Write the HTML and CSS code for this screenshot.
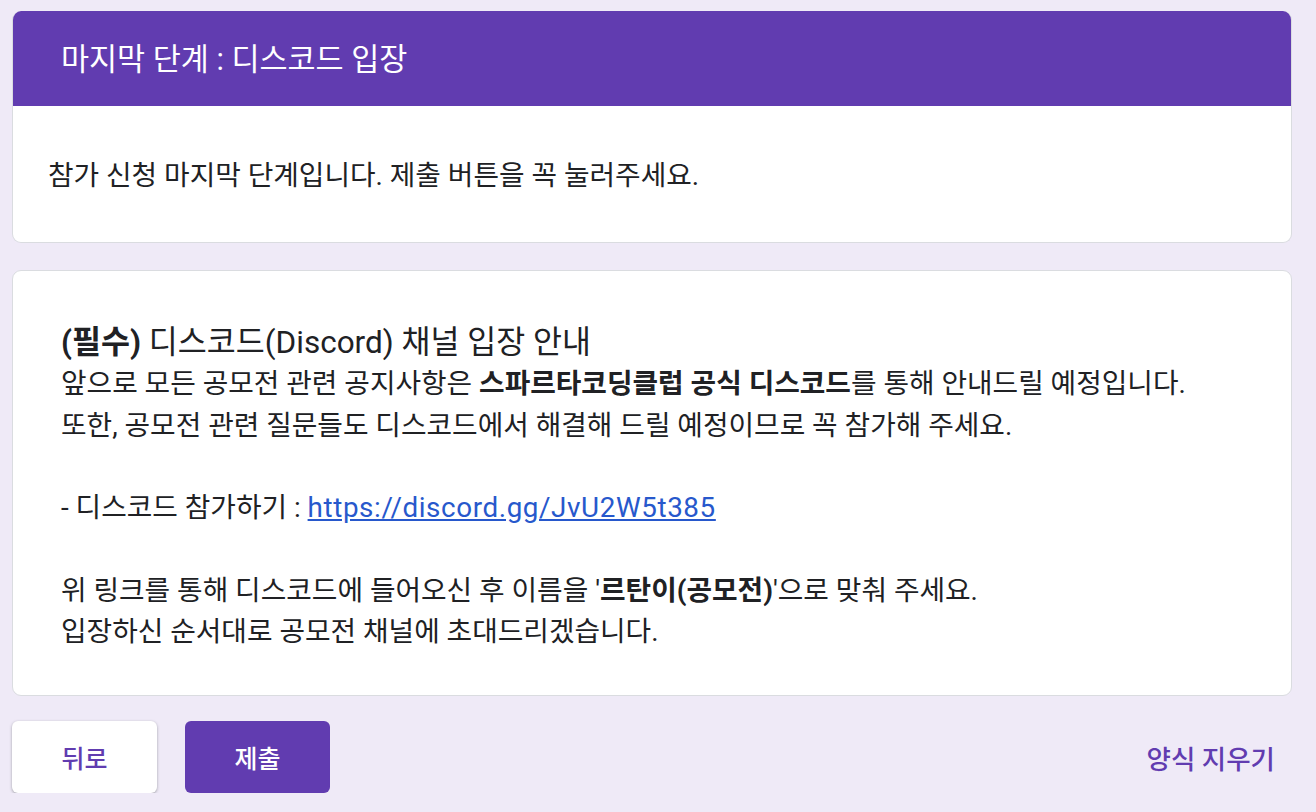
FILE: index.html
```html
<!DOCTYPE html>
<html lang="ko">
<head>
<meta charset="utf-8">
<title>마지막 단계 : 디스코드 입장</title>
<link rel="stylesheet" href="styles.css">
</head>
<body>
<main class="form">
  <section class="card header-card">
    <div class="header-bar">
      <h1 class="header-title">마지막 단계 : 디스코드 입장</h1>
    </div>
    <div class="header-body">
      <p class="desc">참가 신청 마지막 단계입니다. 제출 버튼을 꼭 눌러주세요.</p>
    </div>
  </section>

  <section class="card info-card">
    <div class="info-text">
      <p class="lead"><b>(필수)</b> 디스코드(Discord) 채널 입장 안내</p>
      <p>앞으로 모든 공모전 관련 공지사항은 <b>스파르타코딩클럽 공식 디스코드</b>를 통해 안내드릴 예정입니다.</p>
      <p>또한, 공모전 관련 질문들도 디스코드에서 해결해 드릴 예정이므로 꼭 참가해 주세요.</p>
      <p class="blank">&nbsp;</p>
      <p>- 디스코드 참가하기 : <a class="link" href="#">https://discord.gg/JvU2W5t385</a></p>
      <p class="blank">&nbsp;</p>
      <p>위 링크를 통해 디스코드에 들어오신 후 이름을 '<b>르탄이(공모전)</b>'으로 맞춰 주세요.</p>
      <p>입장하신 순서대로 공모전 채널에 초대드리겠습니다.</p>
    </div>
  </section>

  <div class="footer">
    <div class="buttons">
      <button class="btn btn-back" type="button">뒤로</button>
      <button class="btn btn-submit" type="button">제출</button>
    </div>
    <button class="clear" type="button">양식 지우기</button>
  </div>
</main>
</body>
</html>
```

FILE: styles.css
```css
html, body {
  margin: 0;
  padding: 0;
}
body {
  background: #efeaf7;
  font-family: Roboto, "Noto Sans CJK KR", sans-serif;
  color: #202124;
}
.form {
  width: 1280px;
  padding: 11px 0 0 12px;
  display: flex;
  flex-direction: column;
}
.card {
  background: #fff;
  border: 1px solid #dadce0;
  border-radius: 9px;
  box-sizing: border-box;
}
.header-card {
  border-top: none;
  overflow: hidden;
}
.header-bar {
  background: #613cb0;
  height: 95px;
  display: flex;
  align-items: center;
  padding-left: 49px;
  padding-bottom: 3px;
  box-sizing: border-box;
  margin: 0 -1px;
}
.header-title {
  margin: 0;
  font-size: 30.5px;
  font-weight: 400;
  color: #fff;
}
.header-body {
  height: 136px;
  display: flex;
  align-items: center;
  padding-left: 35px;
}
.desc {
  margin: 0;
  font-size: 27.8px;
  position: relative;
  top: -1px;
}
.info-card {
  margin-top: 27px;
  height: 426px;
  padding: 51px 48px 0 48px;
}
.info-text p {
  margin: 0;
  font-size: 27.8px;
  line-height: 41.3px;
}
.info-text p.lead {
  font-size: 31.5px;
}
.info-text b {
  font-weight: 700;
}
.link {
  color: #2758cc;
  text-decoration: underline;
  letter-spacing: 0.6px;
}
.footer {
  margin-top: 25px;
  display: flex;
  justify-content: space-between;
  align-items: center;
}
.buttons {
  display: flex;
  gap: 28px;
}
.btn {
  width: 145px;
  height: 72px;
  border-radius: 6px;
  border: none;
  font-family: inherit;
  font-size: 25px;
  font-weight: 500;
  cursor: pointer;
}
.btn-back {
  background: #fff;
  color: #613cb0;
  box-shadow: 0 1px 3px rgba(60, 64, 67, 0.45);
}
.btn-submit {
  background: #613cb0;
  color: #fff;
}
.clear {
  background: none;
  border: none;
  font-family: inherit;
  font-size: 26.5px;
  font-weight: 500;
  color: #613cb0;
  padding: 0 17px 0 0;
  cursor: pointer;
}
```
